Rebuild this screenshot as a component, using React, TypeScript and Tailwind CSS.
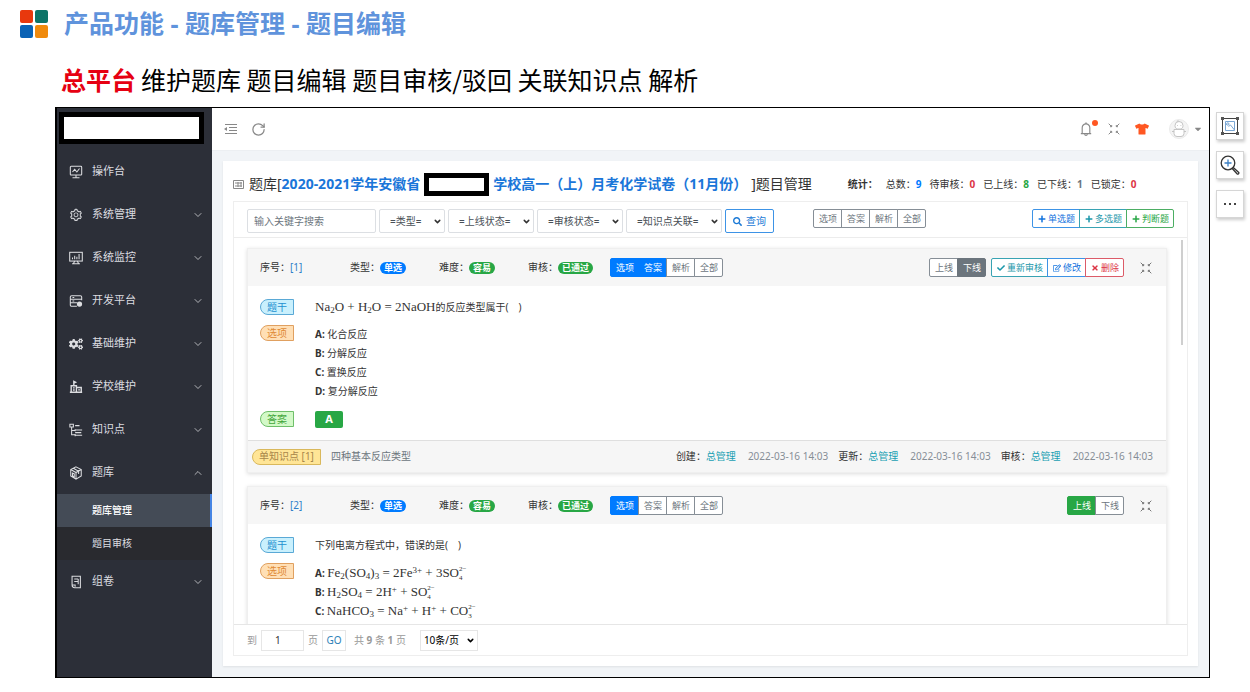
import type { ReactNode } from 'react';
import { ChevronDown, ChevronUp, RotateCw } from 'lucide-react';
import { FaCaretDown, FaCheck, FaCogs, FaPlus, FaRegEdit, FaSearch, FaTimes, FaTshirt } from 'react-icons/fa';
import { AiOutlineBell, AiOutlineSetting } from 'react-icons/ai';
import { clsx } from 'clsx';

const strokeProps = {
  viewBox: '0 0 16 16',
  fill: 'none',
  stroke: 'currentColor',
  strokeWidth: 1.2,
  className: 'size-[14px] shrink-0',
  'aria-hidden': true
};

const icons = {
  console: (
    <svg {...strokeProps}>
      <rect x="1.5" y="1.5" width="13" height="10" rx="1" />
      <path d="M4 8l2.500-3 2.500 3 3-4M4 14.500h8M8 11.500v3" />
    </svg>
  ),
  monitor: (
    <svg {...strokeProps}>
      <rect x="0.800" y="1.500" width="14.400" height="10" />
      <path d="M4 9.500v-2M6.500 9.500v-4M9 9.500v-3M11.500 9.500v-6M6.500 11.500l-1.500 3M9.500 11.500l1.500 3M3.500 14.500h9" />
    </svg>
  ),
  server: (
    <svg {...strokeProps}>
      <path d="M14.500 7V3.500a1.500 1.500 0 0 0-1.500-1.500H3a1.500 1.500 0 0 0-1.500 1.500v9A1.500 1.500 0 0 0 3 14h6M1.500 6h13M1.500 10h8M4 4h2M4 8h2" />
      <circle cx="12" cy="11.500" r="1.500" strokeWidth="3" />
    </svg>
  ),
  school: (
    <svg {...strokeProps}>
      <path d="M1 14h14M2.500 14V6.500h6V14M8.500 8.500H14V14M5.500 6.500V1.500l2 1-2 1M4.500 9h2M4.500 11.500h2M10.500 11.300h2" strokeWidth="1.600" />
    </svg>
  ),
  tree: (
    <svg {...strokeProps}>
      <path d="M1 1.500h4v3H1zM3 4.500v9h4M3 8.500h4M7 3h5M7 8h8M7 11h7M7 14h8M7 7v2.500M7 12.500V15" />
    </svg>
  ),
  cube: (
    <svg {...strokeProps}>
      <path d="M8 1l6 3v7.500L8 15l-6-3.500V4zM2 4l6 3.500L14 4M8 7.500V15M5 2.500l6 3.500v3M4 8v3.500l2 1V9z" />
    </svg>
  ),
  paper: (
    <svg {...strokeProps}>
      <path d="M3.500 11.500v-10h9.500v13H6.500a3 3 0 0 1-3-3h3.500v2M6 4.500h4.500M6 7.500h4.500M10.500 4.500v6" />
    </svg>
  )
};

function MenuItem({ icon, label, arrow = 'down' }: { icon: ReactNode; label: string; arrow?: 'down' | 'up' | 'none' }) {
  return (
    <a href="#" className="flex h-[43px] items-center gap-[9px] pr-2 pl-3 text-[11px] text-[#dcdde0]">
      {icon}
      <span className="grow">{label}</span>
      {arrow === 'down' && <ChevronDown className="size-3" strokeWidth={1.5} />}
      {arrow === 'up' && <ChevronUp className="size-3" strokeWidth={1.5} />}
    </a>
  );
}

function Sidebar() {
  return (
    <nav className="w-[155px] shrink-0 bg-[#2c2f38]">
      <div className="mt-1 mr-2 ml-[2px] h-8 border-[5px] border-black bg-white" />
      <div className="pt-[6px]">
        <MenuItem icon={icons.console} label="操作台" arrow="none" />
        <MenuItem icon={<AiOutlineSetting className="size-[14px]" />} label="系统管理" />
        <MenuItem icon={icons.monitor} label="系统监控" />
        <MenuItem icon={icons.server} label="开发平台" />
        <MenuItem icon={<FaCogs className="size-[14px]" />} label="基础维护" />
        <MenuItem icon={icons.school} label="学校维护" />
        <MenuItem icon={icons.tree} label="知识点" />
        <MenuItem icon={icons.cube} label="题库" arrow="up" />
        <div className="bg-[#292a2f] text-[10px] text-[#dcdde0]">
          <a href="#" className="flex h-[33px] items-center border-r-2 border-[#4484e4] bg-[#444b56] pl-[35px] font-medium text-white">
            题库管理
          </a>
          <a href="#" className="flex h-[33px] items-center pl-[35px]">
            题目审核
          </a>
        </div>
        <MenuItem icon={icons.paper} label="组卷" />
      </div>
    </nav>
  );
}

function ExpandIcon({ className }: { className?: string }) {
  return (
    <svg viewBox="0 0 12 12" fill="none" stroke="currentColor" strokeWidth="1" className={clsx('shrink-0', className)} aria-hidden>
      <path d="M.700.700l3 3M3.700 2v1.700H2M11.300.700l-3 3M8.300 2v1.700H10M.700 11.300l3-3M2 8.300h1.700V10M11.300 11.300l-3-3M10 8.300H8.300V10" />
    </svg>
  );
}

function TopBar() {
  return (
    <header className="flex h-[43px] shrink-0 items-center border-b border-[#eceff2] bg-white pr-[6px] pl-3 text-[#888]">
      <button type="button" aria-label="收起菜单">
        <svg viewBox="0 0 13 12" fill="none" stroke="currentColor" className="h-3 w-[13px]" aria-hidden>
          <path d="M1 1.500h12M5 4.500h8M5 7.500h8M1 10.500h12" />
          <path d="M0 6l3-2v4z" fill="currentColor" stroke="none" />
        </svg>
      </button>
      <button type="button" aria-label="刷新" className="ml-[14px]">
        <RotateCw className="size-[15px]" strokeWidth={2} />
      </button>
      <div className="grow" />
      <button type="button" aria-label="通知" className="relative">
        <AiOutlineBell className="size-4" />
        <span className="absolute -top-px -right-1 size-[6px] rounded-full bg-[#ff5722]" />
      </button>
      <button type="button" aria-label="全屏" className="ml-[14px]">
        <ExpandIcon className="size-3" />
      </button>
      <button type="button" aria-label="主题" className="ml-[15px]">
        <FaTshirt className="size-[14px] text-[#ff5722]" />
      </button>
      <button type="button" aria-label="用户" className="ml-5 flex items-center gap-1">
        <svg viewBox="0 0 20 20" fill="#fff" stroke="#c4c4c4" className="size-5" aria-hidden>
          <circle cx="10" cy="10" r="9.500" fill="#f4f4f4" stroke="#eaeaea" />
          <path d="M6 6.500a4 4 0 0 1 8 0c0 2-1 3-2 3.500H8C7 9.500 6 8.500 6 6.500zM5 10.500h10v4a3 3 0 0 1-3 3H8a3 3 0 0 1-3-3zM3 12.500h2M15 12.500h2" />
          <path d="M8 3l1-1.500L10 3M8 6.500h.800M11.500 6.500h.800" />
        </svg>
        <FaCaretDown className="size-[10px]" />
      </button>
    </header>
  );
}

type Tone = 'gray' | 'graySolid' | 'blue' | 'blueSolid' | 'teal' | 'green' | 'greenSolid' | 'red';

const tones: Record<Tone, string> = {
  gray: 'border-[#868e96] text-[#6c757d] bg-white',
  graySolid: 'border-[#6c757d] bg-[#6c757d] text-white',
  blue: 'border-[#3d93e6] text-[#1273de] bg-white',
  blueSolid: 'border-[#007bff] bg-[#007bff] text-white',
  teal: 'border-[#38a3b3] text-[#1b97aa] bg-white',
  green: 'border-[#4cae63] text-[#28a745] bg-white',
  greenSolid: 'border-[#28a745] bg-[#28a745] text-white',
  red: 'border-[#dc5b68] text-[#dc3545] bg-white'
};

function ButtonGroup({ items, className }: { items: { label: string; tone: Tone; icon?: ReactNode }[]; className?: string }) {
  return (
    <div className={clsx('flex shrink-0 text-[9px]', className)}>
      {items.map(({ label, tone, icon }) => (
        <button
          key={label}
          type="button"
          className={clsx(
            '-ml-px flex h-[19px] items-center gap-[2px] border pr-1 pl-[5px] whitespace-nowrap first:ml-0 first:rounded-l-[2px] last:rounded-r-[2px]',
            tones[tone]
          )}
        >
          {icon}
          {label}
        </button>
      ))}
    </div>
  );
}

const sections = ['选项', '答案', '解析', '全部'];

function sectionItems(active: string[]) {
  return sections.map((label) => ({ label, tone: (active.includes(label) ? 'blueSolid' : 'gray') as Tone }));
}

function FilterSelect({ label, className }: { label: string; className: string }) {
  return (
    <div className={clsx('relative shrink-0', className)}>
      <select aria-label={label} className="h-6 w-full appearance-none rounded-[2px] border border-[#dcdfe3] bg-white pl-[10px] text-[10px] text-[#495057]">
        <option>={label}=</option>
      </select>
      <ChevronDown className="pointer-events-none absolute top-[8px] right-[3px] size-[9px] text-[#333]" strokeWidth={4} />
    </div>
  );
}

function FilterBar() {
  return (
    <form className="flex h-9 shrink-0 items-start gap-[3px] border-b border-[#ececec] px-[13px] pt-[7px]">
      <input
        aria-label="关键字"
        placeholder="输入关键字搜索"
        className="h-6 w-[129px] rounded-[2px] border border-[#dcdfe3] px-[6px] text-[10px] placeholder:text-[#6c757d]"
      />
      <FilterSelect label="类型" className="w-[66px]" />
      <FilterSelect label="上线状态" className="w-[86px]" />
      <FilterSelect label="审核状态" className="w-[86px]" />
      <FilterSelect label="知识点关联" className="w-[96px]" />
      <button type="button" className="flex h-6 items-center gap-1 rounded-[2px] border border-[#3d93e6] px-[7px] text-[10px] whitespace-nowrap text-[#1c7ad6]">
        <FaSearch className="size-[9px]" />
        查询
      </button>
      <ButtonGroup className="ml-9" items={sectionItems([])} />
      <div className="grow" />
      <ButtonGroup
        items={[
          { label: '单选题', tone: 'blue', icon: <FaPlus className="size-2" /> },
          { label: '多选题', tone: 'teal', icon: <FaPlus className="size-2" /> },
          { label: '判断题', tone: 'green', icon: <FaPlus className="size-2" /> }
        ]}
      />
    </form>
  );
}

const tagTones = {
  blue: 'border-[#5aa9d6] bg-[#c9f0fd] text-[#2390d0]',
  orange: 'border-[#e0a060] bg-[#ffdfb5] text-[#e08a35]',
  green: 'border-[#6fbf6a] bg-[#d3f9c8] text-[#43a63c]',
  yellow: 'border-[#d9b85c] bg-[#ffe596] text-[#a8854a]'
};

function Tag({ tone, children }: { tone: keyof typeof tagTones; children: ReactNode }) {
  return (
    <span className={clsx('flex h-4 w-fit items-center rounded-l-full border px-[6px] text-[10px] whitespace-nowrap', tagTones[tone])}>
      {children}
    </span>
  );
}

function Pill({ tone, children }: { tone: 'blue' | 'green'; children: ReactNode }) {
  return (
    <span
      className={clsx(
        'flex h-3 items-center rounded-full px-1 text-[9px] font-bold text-white',
        tone === 'blue' ? 'bg-[#007bff]' : 'bg-[#28a745]'
      )}
    >
      {children}
    </span>
  );
}

function Formula({ children }: { children: ReactNode }) {
  return <span className="font-['Liberation_Serif','Noto_Sans_CJK_SC',serif] text-[13px] whitespace-pre">{children}</span>;
}

// Superscript charge above the subscript count
function Ion({ sup, sub }: { sup: string; sub: string }) {
  return (
    <span className="inline-flex flex-col align-middle text-[7px] leading-[9px]">
      <span>{sup}</span>
      <span>{sub}</span>
    </span>
  );
}

function Sub({ children }: { children: ReactNode }) {
  return <sub className="text-[9px]">{children}</sub>;
}

function Sup({ children }: { children: ReactNode }) {
  return <sup className="text-[9px]">{children}</sup>;
}

type Question = {
  no: number;
  active: string[];
  online: boolean;
  stem: ReactNode;
  options: [string, ReactNode][];
  answer?: string;
  point?: string;
};

const questions: Question[] = [
  {
    no: 1,
    active: ['选项', '答案'],
    online: false,
    stem: (
      <>
        <Formula>
          Na<Sub>2</Sub>O + H<Sub>2</Sub>O = 2NaOH
        </Formula>
        的反应类型属于(&emsp;)
      </>
    ),
    options: [
      ['A', '化合反应'],
      ['B', '分解反应'],
      ['C', '置换反应'],
      ['D', '复分解反应']
    ],
    answer: 'A',
    point: '四种基本反应类型'
  },
  {
    no: 2,
    active: ['选项'],
    online: true,
    stem: <>下列电离方程式中，错误的是(&emsp;)</>,
    options: [
      [
        'A',
        <Formula key="a">
          Fe<Sub>2</Sub>(SO<Sub>4</Sub>)<Sub>3</Sub> = 2Fe<Sup>3+</Sup> + 3SO
          <Ion sup="2−" sub="4" />
        </Formula>
      ],
      [
        'B',
        <Formula key="b">
          H<Sub>2</Sub>SO<Sub>4</Sub> = 2H<Sup>+</Sup> + SO
          <Ion sup="2−" sub="4" />
        </Formula>
      ],
      [
        'C',
        <Formula key="c">
          NaHCO<Sub>3</Sub> = Na<Sup>+</Sup> + H<Sup>+</Sup> + CO
          <Ion sup="2−" sub="3" />
        </Formula>
      ]
    ]
  }
];

function QuestionCard({ question }: { question: Question }) {
  const { no, active, online, stem, options, answer, point } = question;

  return (
    <article className="shrink-0 border border-[#efefef] bg-white shadow-[0_1px_4px_rgba(0,0,0,0.14)]">
      <div className="flex h-[37px] items-center bg-[#f6f6f6] pr-[14px] pl-3">
        <div className="w-[90px]">
          序号：<span className="text-[#2f7fc9]">[{no}]</span>
        </div>
        <div className="flex w-[89px] items-center">
          类型：<Pill tone="blue">单选</Pill>
        </div>
        <div className="flex w-[89px] items-center">
          难度：<Pill tone="green">容易</Pill>
        </div>
        <div className="flex w-[82px] items-center">
          审核：<Pill tone="green">已通过</Pill>
        </div>
        <ButtonGroup items={sectionItems(active)} />
        <div className="grow" />
        <ButtonGroup
          items={[
            { label: '上线', tone: online ? 'greenSolid' : 'gray' },
            { label: '下线', tone: online ? 'gray' : 'graySolid' }
          ]}
        />
        {!online && (
          <ButtonGroup
            className="ml-[5px]"
            items={[
              { label: '重新审核', tone: 'teal', icon: <FaCheck className="size-2" /> },
              { label: '修改', tone: 'blue', icon: <FaRegEdit className="size-2" /> },
              { label: '删除', tone: 'red', icon: <FaTimes className="size-2" /> }
            ]}
          />
        )}
        <button type="button" aria-label="展开" className="ml-4 text-[#777]">
          <ExpandIcon className="size-3" />
        </button>
      </div>
      <div className="grid grid-cols-[55px_1fr] gap-y-[10px] px-3 pt-[13px] pb-3">
        <Tag tone="blue">题干</Tag>
        <div className="h-4 leading-4">{stem}</div>
        <Tag tone="orange">选项</Tag>
        <ul>
          {options.map(([key, content]) => (
            <li key={key} className="h-[19px] leading-[19px]">
              <b>{key}:</b> {content}
            </li>
          ))}
        </ul>
        {answer && (
          <>
            <Tag tone="green">答案</Tag>
            <span className="flex h-[17px] w-7 items-center justify-center rounded-[2px] bg-[#28a745] text-[11px] font-bold text-white">
              {answer}
            </span>
          </>
        )}
      </div>
      {point && (
        <div className="flex h-8 items-center gap-[10px] border-t border-[#dfdfdf] bg-[#f6f6f6] pr-[13px] pl-1">
          <Tag tone="yellow">单知识点 [1]</Tag>
          <span className="text-[#6c757d]">{point}</span>
          <div className="grow" />
          {['创建', '更新', '审核'].map((action) => (
            <div key={action} className="flex gap-3 whitespace-nowrap">
              <span>
                {action}：<span className="text-[#1a9fb3]">总管理</span>
              </span>
              <time className="text-[#868e96]">2022-03-16 14:03</time>
            </div>
          ))}
        </div>
      )}
    </article>
  );
}

function Pager() {
  return (
    <footer className="flex h-[31px] shrink-0 items-center border-t border-[#e6e6e6] px-[13px] text-[#999]">
      <label htmlFor="page">到</label>
      <input id="page" defaultValue="1" className="mx-[4px] h-[21px] w-[43px] border border-[#e6e6e6] px-[13px] text-[#333]" />
      页
      <button type="button" className="ml-1 h-[21px] w-6 border border-[#e6e6e6] text-[#2f7fb8]">
        GO
      </button>
      <span className="ml-2">
        共 <b>9</b> 条 <b>1</b> 页
      </span>
      <div className="relative ml-[14px] w-[58px]">
        <select aria-label="每页条数" className="h-[21px] w-full appearance-none border border-[#e6e6e6] bg-white pl-[3px] text-black">
          <option>10条/页</option>
        </select>
        <ChevronDown className="pointer-events-none absolute top-[6px] right-[3px] size-[9px] text-black" strokeWidth={4} />
      </div>
    </footer>
  );
}

const stats = [
  { label: '总数', value: 9, color: 'text-[#007bff]' },
  { label: '待审核', value: 0, color: 'text-[#dc3545]' },
  { label: '已上线', value: 8, color: 'text-[#28a745]' },
  { label: '已下线', value: 1, color: 'text-[#6c757d]' },
  { label: '已锁定', value: 0, color: 'text-[#dc3545]' }
];

function Workspace() {
  return (
    <section className="mx-[11px] mt-[10px] mb-[11px] flex min-h-0 grow flex-col bg-white px-[10px] pb-[10px] shadow-[0_1px_2px_rgba(0,0,0,0.08)]">
      <div className="flex h-10 shrink-0 items-center pt-[6px] whitespace-nowrap">
        <svg viewBox="0 0 11 9" fill="none" stroke="#888" className="h-[9px] w-[11px]" aria-hidden>
          <path d="M.500.500h10v8H.500zM2 3h7M2 6h7M5 2v5M8 2v5" />
        </svg>
        <h2 className="ml-[5px] flex items-center text-sm text-[#333]">
          题库[<b className="text-[#1a76d9]">2020-2021学年安徽省</b>
          <span className="mx-1 h-[23px] w-[65px] border-[5px] border-black bg-white" />
          <b className="mr-1 text-[#1a76d9]">学校高一（上）月考化学试卷（11月份）</b>]题目管理
        </h2>
        <dl className="ml-9 flex gap-2">
          <dt className="font-bold">统计：</dt>
          {stats.map(({ label, value, color }) => (
            <dd key={label}>
              {label}：<b className={color}>{value}</b>
            </dd>
          ))}
        </dl>
      </div>
      <div className="flex min-h-0 grow flex-col border border-[#eee]">
        <FilterBar />
        <div className="relative flex min-h-0 grow flex-col gap-[13px] overflow-hidden pt-[10px] pr-5 pl-[13px]">
          {questions.map((question) => (
            <QuestionCard key={question.no} question={question} />
          ))}
          <div className="absolute top-[2px] right-1 h-[105px] w-[2px] bg-[#cfcfcf]" />
        </div>
        <Pager />
      </div>
    </section>
  );
}

function FloatingTools() {
  const button = 'flex size-7 items-center justify-center border border-[#d6d6d6] bg-white shadow-[1px_2px_3px_rgba(0,0,0,0.2)]';

  return (
    <aside className="flex w-10 shrink-0 flex-col gap-[11px] pt-[5px] pl-[6px]">
      <button type="button" aria-label="图片" className={button}>
        <svg viewBox="0 0 20 20" fill="none" stroke="#444" className="size-5" aria-hidden>
          <path d="M2.500 2.500h15v15h-15z" />
          <path d="M1 1h3v3H1zM16 1h3v3h-3zM1 16h3v3H1zM16 16h3v3h-3z" fill="#555" stroke="none" />
          <path d="M5.500 5.500h9v9h-9zM6 8.500l3 0M8.500 10.500l2-1.500 4 5" stroke="#7ba7d4" />
          <circle cx="7.800" cy="8" r="1.200" fill="#fff" stroke="#7ba7d4" />
        </svg>
      </button>
      <button type="button" aria-label="放大" className={button}>
        <svg viewBox="0 0 20 20" fill="none" stroke="#333" strokeWidth="1.300" className="size-5" aria-hidden>
          <circle cx="8" cy="8" r="6.800" />
          <path d="M13 12.200l5.500 5a1 1 0 0 1-1.500 1.500L12 13.300" />
          <path d="M8 4.500v7M4.500 8h7" stroke="#3b7fc4" />
        </svg>
      </button>
      <button type="button" aria-label="更多" className={button}>
        <svg viewBox="0 0 14 4" fill="#444" className="h-1 w-[14px]" aria-hidden>
          <path d="M1 1h2v2H1zM6 1h2v2H6zM11 1h2v2h-2z" />
        </svg>
      </button>
    </aside>
  );
}

export default function App() {
  return (
    <div className="flex h-screen flex-col bg-white pb-[14px] font-['Noto_Sans','Noto_Sans_CJK_SC',sans-serif] text-[10px] leading-[1.5] text-[#333]">
      <div className="flex h-12 shrink-0 items-center gap-4 pl-5">
        <div className="grid grid-cols-2 gap-[2px]">
          <span className="size-[13px] rounded-[2px] bg-[#e8380d]" />
          <span className="size-[13px] rounded-[2px] bg-[#0d7468]" />
          <span className="size-[13px] rounded-[2px] bg-[#0a62b5]" />
          <span className="size-[13px] rounded-[2px] bg-[#f08a0c]" />
        </div>
        <h1 className="text-[25px] font-bold text-[#5f93dc]">产品功能 - 题库管理 - 题目编辑</h1>
      </div>
      <p className="flex h-[59px] shrink-0 items-center gap-[5px] pt-1 pl-[61px] font-['Noto_Sans_CJK_SC',sans-serif] text-[25px] text-black">
        <b className="text-[#e60012]">总平台</b>
        维护题库 题目编辑 题目审核/驳回 关联知识点 解析
      </p>
      <div className="flex min-h-0 grow pl-[55px]">
        <main className="flex min-w-0 grow border border-l-2 border-black bg-[#f1f4f7]">
          <Sidebar />
          <div className="flex min-w-0 grow flex-col">
            <TopBar />
            <Workspace />
          </div>
        </main>
        <FloatingTools />
      </div>
    </div>
  );
}
